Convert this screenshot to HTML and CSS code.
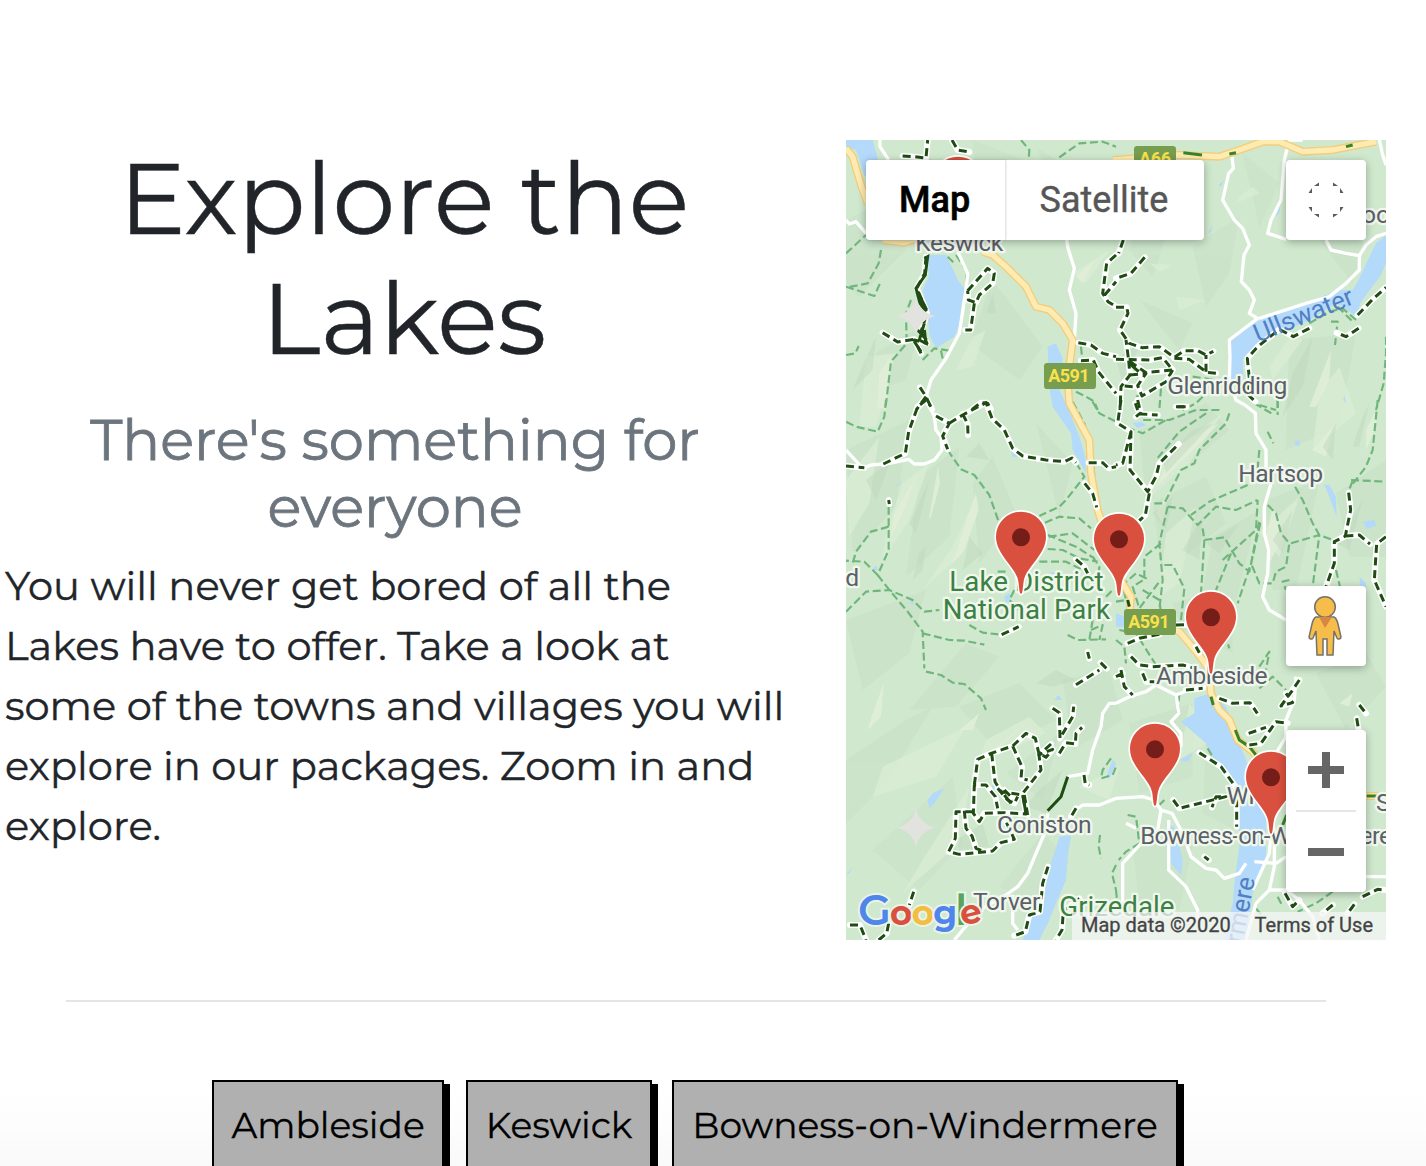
FILE: index.html
```html
<!DOCTYPE html>
<html lang="en">
<head>
<meta charset="utf-8">
<title>Explore the Lakes</title>
<link rel="stylesheet" href="styles.css">
</head>
<body>
<main class="page">
  <section class="explore">
    <div class="intro">
      <h1 class="title">Explore the<br>Lakes</h1>
      <h2 class="subtitle">There's something for<br>everyone</h2>
      <p class="copy">You will never get bored of all the<br>Lakes have to offer. Take a look at<br>some of the towns and villages you will<br>explore in our packages. Zoom in and<br>explore.</p>
    </div>
    <div class="map">
      <svg class="map-canvas" viewBox="0 0 1620 2400" width="540" height="800">
        <defs>
          <g id="pin"><path d="M0 0C-6 0-5-24-9-42C-18-82-75-118-75-171A75 75 0 0 1 75-171C75-118 18-82 9-42C5-24 6 0 0 0Z" fill="#d9503f" stroke="#fff" stroke-width="10" paint-order="stroke"/><circle cy="-169" r="27" fill="#751d18"/></g>
          <path id="star" d="M0-58Q10-12 58 0Q10 12 0 58Q-10 12-58 0Q-10-12 0-58Z" fill="#e2e2df"/>
          <path id="d1" d="M170 48L205 50L240 54L245 0M318 0L335 30L370 36M240 350L236 400L212 445L230 485L243 520L225 575L243 610L205 600L225 640M110 578L155 606L205 598M365 452L425 385L445 400L440 430L400 465L390 488L367 480L365 452M385 490L374 570L358 570M222 742L240 770L258 808M240 770L212 808M378 808L405 788L425 790L435 808M810 345L782 370L770 460L786 485L810 500M697 608L735 615L770 640L810 650M705 662L742 660L757 695L810 760M776 465L810 425"/>
          <path id="d2" d="M22 300L8 340M86 352L45 400L0 415M0 502L32 502L36 520L12 570L40 610L78 623L130 620L175 652L205 632L245 632L270 645L292 634M175 655L220 658L272 697L300 700M270 695L270 645M0 658L100 660L140 653L170 690L90 698L38 662L30 600M38 662L42 705L15 740L12 810M42 705L90 700L65 737L78 768L150 725L170 690M50 740L22 738M65 810L58 790M725 525L768 480L810 442M728 565L690 590L662 578M580 565L532 590L490 568L425 620L394 655L400 715L392 760L418 785M185 800L210 800"/>
          <path id="d3" d="M0 198L55 203M112 192L178 160L188 95L215 20L240 0L255 20M270 48L310 70L290 108L305 148M310 70L350 45L420 8L438 55L475 90L500 145L530 168L600 180L655 185L678 174L690 188M350 42L365 72L366 105M728 188L770 188L788 205L810 200M716 250L740 280L752 322M128 300L130 312M467 704L518 680M690 478L715 500L725 520M725 756L730 776M764 788L782 806"/>
          <path id="d4" d="M15 0L5 70L45 95L42 210L95 275L120 230L130 190L188 132M45 95L20 190L0 195M100 280L88 345L70 362M65 0L75 42L125 45M60 50L75 38M180 20L212 20M698 278L704 330L688 408L655 425L655 490L630 560M688 408L730 405L762 432M810 410L782 432L775 540L810 620M130 703L70 715L35 730M180 675L210 674M240 740L250 758M45 770L70 795L110 800L200 795L240 806"/>
          <path id="d5" d="M690 44L760 0M620 115L640 128L642 205L680 140L683 110M640 250L660 218L688 222L690 190L708 172M615 222L578 255L620 238L600 262L578 248L585 300L530 370L540 432L470 428L415 430L400 455L382 430L385 345L420 345L448 380L455 415M385 345L395 268L435 250L500 228L540 190L568 205L578 248M437 250L447 335L465 365L530 375M500 228L528 290L525 325L545 330M455 355L485 390L505 400L515 380M475 360L495 380M535 375L545 435M382 425L330 425L328 505L308 545L340 553L440 543L465 518L505 508L480 455M355 422L360 475L378 498L390 535L410 543M714 315L718 342L730 345M690 415L675 440M606 590L590 640L582 725L550 735L538 785L505 797M203 665L190 705M12 765L42 765L60 810M128 760L122 790L98 810M700 685L652 725L648 780L630 810"/>
          <path id="d6" d="M15 0L25 50L50 75M0 20L20 10M80 10L90 35L115 35M210 60L260 55M310 85L350 100L402 98L424 130M398 190L450 172M400 225L435 220L480 155L515 160M550 30L530 60L495 108L530 98L510 70M250 248L315 290L362 355L362 470M172 390L190 415L330 380L300 380L288 412M265 560L278 570M730 105L750 130M722 145L728 180M507 670L530 710L550 690M740 680L785 658L810 660M650 705L620 730M715 703L695 730"/>
        </defs>
        <rect width="1620" height="2400" fill="#d0e9ce"/>
        <!-- relief -->
        <g fill="#c9e2c8" opacity=".75">
          <path d="M0 240L120 180L180 330L40 470L0 430ZM380 0L560 70L520 240L390 190ZM250 50L340 150L300 230ZM90 640L220 560L180 720L70 760ZM440 420L590 620L520 720L370 610ZM570 20L720 120L660 230ZM910 110L990 200L920 410L850 330ZM1040 320L1180 230L1150 400L1080 500ZM1190 40L1300 130L1240 260ZM1420 300L1560 270L1520 430ZM880 480L1040 550L1000 630ZM1330 600L1530 580L1480 860L1320 930Z"/>
          <path d="M0 930L190 840L150 1100L20 1240ZM220 1010L340 920L310 1190L180 1310ZM380 1030L440 950L510 1120L400 1270ZM570 850L680 970L640 1130ZM0 1440L240 1350L190 1540L50 1650ZM190 1710L360 1510L460 1550L330 1700ZM880 870L1080 790L1150 870L900 1080ZM920 1090L1080 1010L1140 1150L950 1300ZM1100 1190L1240 1110L1170 1380L1060 1420ZM1260 1080L1420 1020L1350 1350L1280 1350ZM1470 1060L1620 960L1620 1250L1510 1250ZM980 1390L1160 1340L1160 1540L1010 1470Z"/>
          <path d="M0 1860L180 1740L260 1700L120 1930L0 2050ZM80 2130L320 1910L350 2110L220 2250ZM340 1700L520 1630L630 1740L450 1830ZM480 1900L640 1780L590 1980ZM590 2080L670 2160L580 2300L460 2240ZM650 1620L790 1590L830 1740L680 1830ZM850 1750L1040 1690L1040 1910L880 1960ZM860 2120L1050 2070L1000 2310L880 2290ZM1080 1810L1190 1900L1170 2070L1070 2020ZM1410 1600L1560 1540L1620 1640L1500 1770Z"/>
        </g>
        <g fill="#daecd4" opacity=".8">
          <path d="M60 650L150 640L90 860L40 860ZM380 590L420 570L380 680L330 690ZM440 60L570 130L510 170ZM680 400L790 330L720 430ZM910 370L980 375L940 395ZM1180 170L1220 140L1240 160L1170 190ZM990 470L1080 480L1000 510ZM1270 680L1340 580L1370 600L1280 720ZM1420 760L1480 680L1530 820L1400 930ZM0 1020L100 890L70 1090L10 1190ZM120 1180L170 1030L250 970L190 1140L110 1260ZM320 1220L390 1070L350 1240L230 1350ZM930 970L1130 820L1030 970L890 1090ZM960 1180L1050 1100L1000 1330L940 1370ZM1240 1180L1360 1070L1300 1250ZM110 1880L360 1760L270 1910L80 1970ZM230 2160L370 1940L340 2110L170 2260ZM420 1800L550 1730L600 1780L400 1870ZM700 1940L820 1880L790 1980ZM1030 1690L1110 1790L1000 1860Z"/>
        </g>
        <g fill="#e2efd8" opacity=".85">
          <path d="M100 700L133 650L120 810L94 800ZM145 1120L210 1010L170 1120L135 1190ZM248 1140L276 980L282 1030L255 1130ZM375 1100L390 1060L398 1110L355 1230L320 1270ZM990 920L1120 850L1030 940L930 1040ZM930 1120L970 1050L950 1150ZM1390 800L1455 630L1450 720L1410 800ZM1400 930L1460 860L1440 950ZM1260 1190L1280 1100L1310 1190L1270 1270ZM1560 870L1590 810L1590 860L1560 930ZM80 1720L113 1630L105 1730L65 1770ZM340 1770L400 1720L380 1770ZM430 1840L550 1740L450 1830ZM690 410L745 360L710 430ZM1480 1690L1520 1660L1510 1700Z"/>
        </g>
        <g fill="#bfd6bd" opacity=".45">
          <path d="M40 700L90 590L80 690L20 750ZM60 1020L135 960L90 1080ZM190 1150L250 1020L210 1180ZM220 1240L240 1220L230 1290L200 1320ZM340 970L400 910L430 960L360 950ZM370 1190L410 1240L350 1290ZM950 960L1040 870L1100 850L960 1000ZM920 1120L980 1070L960 1170ZM1010 1230L1070 1130L1060 1260ZM1080 1210L1180 1150L1120 1240ZM1340 700L1400 590L1370 740L1310 830ZM1430 920L1470 850L1460 960ZM1520 920L1550 830L1570 790L1540 920ZM1280 1200L1340 1110L1310 1240ZM1470 1210L1550 1080L1510 1230ZM630 1590L690 1620L620 1640L570 1630ZM570 1960L650 1890L600 2020L540 2000ZM330 2100L410 2050L430 2120L340 2130ZM810 660L890 600L830 730ZM420 520L440 460L450 520Z"/>
        </g>
        <!-- water -->
        <g fill="#b3d9fb">
          <path d="M20 0L80 0L95 55L105 100L55 108L30 30L0 20L0 0ZM245 345L300 345L325 395L335 420L355 445L345 500L340 555L325 590L270 625L250 585L245 520L230 450L248 410ZM605 620L630 610L650 655L640 750L665 800L700 890L718 950L720 1000L680 930L675 880L620 800L610 745ZM1150 605L1230 545L1400 480L1480 450L1520 450L1535 425L1580 330L1590 310L1620 285L1620 370L1605 405L1545 485L1530 530L1505 510L1470 490L1390 540L1300 580L1250 615L1190 660L1192 720L1150 740Z"/>
          <path d="M1045 1675L1095 1660L1140 1700L1165 1770L1200 1860L1230 1930L1260 2030L1260 2150L1240 2210L1220 2260L1200 2400L1135 2400L1160 2290L1165 2230L1180 2120L1175 1960L1120 1890L1080 1810L1005 1745L1045 1720ZM640 2090L675 2085L665 2150L660 2220L630 2290L610 2340L580 2400L530 2400L560 2320L600 2240L610 2180L625 2140ZM970 2055L985 2060L1010 2160L1005 2205L975 2170ZM245 1980L260 1960L295 1945L265 1990L250 2005ZM435 1950L445 1925L455 1950ZM625 1680L637 1665L648 1680ZM1000 1860L1040 1840L1025 1865ZM860 850L885 845L900 855L875 865ZM1435 1035L1450 1035L1470 1070L1472 1130L1450 1070ZM1550 1145L1585 1140L1590 1155L1565 1168ZM1540 1310L1560 1330L1560 1365L1545 1350ZM475 1370L490 1360L495 1375L480 1390ZM780 1910L800 1860L810 1870L790 1915ZM810 1420L840 1430L835 1460L810 1460ZM495 930L515 950L500 952ZM1345 905L1360 900L1362 915L1350 918Z"/>
          <path d="M145 1045L170 1020L160 1035ZM0 2205L20 2180L10 2200ZM1085 280L1100 255L1095 275ZM1118 135L1135 120L1125 140ZM1290 230L1305 180L1300 220ZM1495 765L1500 790L1492 780ZM80 1290L90 1275L95 1290ZM190 1380L203 1385L198 1395ZM612 1295L630 1298L620 1308Z"/>
        </g>
        <!-- hill paths -->
        <g class="path-green">
          <path d="M525 0L550 30L548 60M640 52L700 10L770 5L810 20M0 340L60 285M105 330L98 370L65 430L0 443M0 440L85 468L102 430M195 480L180 520L182 610L135 665L118 808M0 645L28 640L38 618M330 345L360 390L362 450M305 350L325 370M230 660L265 625L310 632M285 632L292 665M705 620L710 670M690 755L720 770L745 785L755 810"/>
          <g transform="translate(810)"><path d="M580 550L640 515L680 505L720 540M645 545L665 545L657 615M665 500L710 545M135 745L130 810M260 770L240 790L200 810M430 795L480 810M485 780V810M810 590V640L803 730L780 810M60 770L130 745M230 710L300 720"/></g>
          <g transform="translate(0 780)"><path d="M120 0L115 50L95 95L30 80L0 65M305 150L345 208L385 225L430 285L458 365M128 320L128 450L95 525L55 485L0 482M128 380L75 395L30 455L20 490M95 525L130 570L185 635L230 695L235 805M0 635L30 605L60 575L130 570L200 600L235 635L280 630M230 700L310 720L355 722L415 734M370 675L410 698L467 704M680 5L715 70L740 160L745 230L755 320M690 188L715 230L660 300L640 320L580 348M597 368L640 350L700 355L735 385M608 410L680 400L745 450M605 405L690 440L745 475M605 447L650 450L700 475L755 485M580 485L660 485L720 515M505 570L490 600L520 630M665 705L695 720L780 718M735 690L770 675L760 720M740 660L730 720M780 590L800 570M740 5L760 40L810 65M455 515L480 515M740 470L760 500L755 560"/></g>
          <g transform="translate(810 780)"><path d="M310 30L240 30L160 60L75 60M340 40L330 70L250 150L235 190L195 210L145 310L100 310M270 40L190 95L120 180M0 70L80 100L150 60M155 320L200 325L245 375L300 320L360 330L425 300M395 255L280 305L225 345M155 320L130 430L140 540L130 630M135 430L85 470L85 540M145 495L170 495L205 565L195 660M260 385L265 420L255 580M265 420L325 412L370 490L400 515L435 360M345 460L300 570M320 480L420 390L425 300M430 365L405 490L365 610M455 315L480 340L495 400L520 430L510 500L480 515L470 550L430 550L405 490M525 430L610 405L590 560M520 230L560 300L590 370L610 405L650 420M520 540L500 545L510 570M455 95L472 130M430 150L425 205M415 10L475 45M485 0V45M785 0L770 150L750 200L700 265M705 240L810 245M710 240L700 270M660 510L672 560M0 605L30 600L20 555L60 520L90 535L50 560L70 625L130 545M10 690L60 700L120 795M0 720L25 740L30 790M325 700L340 745M430 800L460 755L450 810M80 570L130 600L135 640"/></g>
          <g transform="translate(0 1590)"><path d="M240 5L285 15L320 38L355 42L405 85L420 120M762 495L758 530L765 565M810 585L798 610L810 660M795 265L770 300L765 325L800 315L810 290"/></g>
          <g transform="translate(810 1590)"><path d="M190 70L185 130M275 235L290 260M130 405L145 390M35 435L60 440L70 520L30 545L8 570M0 660L5 710M485 680L500 710M650 665L600 700L545 725M420 715L440 740M430 55L470 20L510 60"/></g>
        </g>
        <!-- minor roads -->
        <g class="road-white">
          <path d="M102 0V20L128 60M0 240L10 252L30 245L60 280M335 335L365 400L360 450L340 580L300 655L255 720L240 770L265 830L270 870L285 890L288 930L265 960L235 972H205L188 958L130 970L75 975L50 985L0 930M662 300L666 325L685 385L670 450L690 520L685 600"/>
          <path d="M1158 50L1162 85L1148 100L1130 180L1165 240L1190 265L1210 315L1194 345L1186 425L1210 450L1225 480L1210 520L1235 535L1150 600L1152 650L1150 720L1170 780L1200 797L1228 820L1230 880L1260 930L1260 990L1275 1030L1255 1100L1255 1180L1268 1230L1265 1300L1250 1370L1270 1410L1320 1440"/>
          <path d="M1370 0H1330L1315 60L1305 180L1275 240L1265 280L1320 298M1440 300L1455 330L1500 340L1540 347L1560 315L1590 290L1620 280M1540 347L1540 390L1500 430L1450 470L1380 490L1240 535M1600 0L1610 45L1620 75"/>
          <path d="M810 1690H790L770 1720L765 1760L740 1830L725 1900L665 1910M605 2020L600 2070L570 2140L545 2200L515 2240L480 2265L400 2310L325 2400M500 2265V2350L515 2370M675 2020L710 1995L760 1995L810 1975L890 1970L925 1980L945 2010L978 2020L1010 2080L1035 2150L1080 2185L1110 2190L1135 2215L1180 2200L1200 2170M810 1690L850 1670L900 1655L930 1635L990 1665L1030 1650L1080 1640M990 1660L998 1720L975 1745L1005 1780L1005 1820M945 2010L935 2070L890 2105L830 2170V2300M968 2040V2190L1020 2240L1055 2310V2340M1275 2080L1270 2140L1220 2250M1285 2070L1285 2180L1270 2250L1230 2290L1200 2400M1225 2165L1290 2170L1320 2150M1270 2250H1320L1360 2280L1400 2330L1420 2400M1350 1610L1345 1680L1320 1740L1320 1790L1290 1840M1560 2210H1620M870 2065L840 2050"/>
        </g>
        <!-- main roads -->
        <g class="road-main">
          <path class="edge" d="M0 25L20 50L45 135L65 190M110 300L175 308L215 295M410 335L440 345L485 385L540 440L570 500L610 510L650 550L680 600L665 720L670 790L730 900L735 1000L755 1110L800 1250L830 1330L855 1370L850 1430L1000 1475L1030 1510L1070 1560L1090 1590L1095 1660L1120 1710L1150 1740L1175 1800L1220 1835L1270 1900M800 60L1000 45L1120 50L1180 30L1250 5H1300L1370 35L1460 30L1590 5M1560 1968H1620"/>
          <path class="fill" d="M0 25L20 50L45 135L65 190M110 300L175 308L215 295M410 335L440 345L485 385L540 440L570 500L610 510L650 550L680 600L665 720L670 790L730 900L735 1000L755 1110L800 1250L830 1330L855 1370L850 1430L1000 1475L1030 1510L1070 1560L1090 1590L1095 1660L1120 1710L1150 1740L1175 1800L1220 1835L1270 1900M800 60L1000 45L1120 50L1180 30L1250 5H1300L1370 35L1460 30L1590 5M1560 1968H1620"/>
        </g>
        <g class="road-green"><path d="M1012 38L1068 45M1150 42L1170 38M1500 20L1520 15M1168 1770L1180 1800L1210 1820L1230 1845M1095 1670L1102 1695M1310 2055L1322 2025M1562 1968H1620"/></g>
        <!-- footpaths -->
        <g class="trail-case"><use href="#d1"/><use href="#d2" x="810"/><use href="#d3" y="780"/><use href="#d4" x="810" y="780"/><use href="#d5" y="1590"/><use href="#d6" x="810" y="1590"/></g>
        <g class="trail"><use href="#d1"/><use href="#d2" x="810"/><use href="#d3" y="780"/><use href="#d4" x="810" y="780"/><use href="#d5" y="1590"/><use href="#d6" x="810" y="1590"/></g>
        <path class="trail-solid" d="M235 355L245 350L238 405L210 445L222 490L240 515M215 455L242 510M235 550L220 600L240 610L235 570M205 605L225 635M215 570L242 600M665 1910L645 1970L605 2012M475 1965L495 1990M530 1965L540 2020M845 1380L850 1400M850 670L878 695"/>
        <use href="#star" x="210" y="528"/><use href="#star" x="210" y="2063"/>
        <!-- road shields -->
        <g><rect x="864" y="18" width="126" height="76" rx="10" class="shield"/><rect x="594" y="669" width="156" height="78" rx="10" class="shield"/><rect x="834" y="1407" width="156" height="78" rx="10" class="shield"/></g>
        <g class="shield-text"><text x="879" y="75" textLength="96">A66</text><text x="607" y="727" textLength="124">A591</text><text x="847" y="1465" textLength="124">A591</text></g>
        <!-- place names -->
        <g class="label">
          <text x="208" y="334" textLength="264">Keswick</text><text x="1548" y="248">oo</text>
          <text x="964" y="762" textLength="360">Glenridding</text><text x="1177" y="1025" textLength="254">Hartsop</text>
          <text x="-2" y="1337">d</text><text x="930" y="1632" textLength="335">Ambleside</text>
          <text x="1142" y="1993">Wi</text><text x="453" y="2080" textLength="284">Coniston</text>
          <text x="883" y="2113" textLength="755">Bowness-on-Windermere</text><text x="1590" y="2013">S</text>
          <text x="381" y="2311" textLength="202">Torver</text>
        </g>
        <g class="label park"><text x="310" y="1353" textLength="463">Lake District</text><text x="290" y="1436" textLength="502">National Park</text><text x="640" y="2328" textLength="345">Grizedale</text></g>
        <g class="water-name"><text transform="translate(1236 608) rotate(-22)" textLength="315">Ullswater</text><text transform="translate(1227 2216) rotate(-79)" text-anchor="end">Windermere</text></g>
        <use href="#pin" x="336" y="296"/><use href="#pin" x="525" y="1361"/><use href="#pin" x="819" y="1367"/><use href="#pin" x="1095" y="1601"/><use href="#pin" x="927" y="1997"/><use href="#pin" x="1275" y="2081"/>
        <g class="google"><text y="2354"><tspan fill="#4e86ec" x="36">G</tspan><tspan fill="#d9503f" class="small" x="132">o</tspan><tspan fill="#f3bd42" class="small" x="197">o</tspan><tspan fill="#4e86ec" class="small" x="262">g</tspan><tspan fill="#58a55c" x="327">l</tspan><tspan fill="#d9503f" class="small" rotate="-14" x="350" dy="4">e</tspan></text></g>
      </svg>
      <div class="map-types"><span class="type active">Map</span><span class="type">Satellite</span></div>
      <div class="ctl fullscreen"><svg width="36" height="36" viewBox="0 0 36 36" fill="#5a5a5a"><path d="M6 4L11 .5V4ZM25 .5L30 4H25ZM4 6V11H.5ZM32 6L35.500 11H32ZM.5 25H4V30ZM35.500 25L32 30V25ZM6 32H11V35.500ZM25 32H30L25 35.500Z"/></svg></div>
      <div class="ctl pegman"><svg width="36" height="62" viewBox="0 0 36 62"><g fill="#f6bd4b" stroke="#757269" stroke-width="1.500"><path d="M9 22H27C29 23 30 25 31 29L34 42C34 44 31 45 30 43L27 36L26 60H20V44H16V60H10L9 36L6 43C5 45 2 44 2 42L5 29C6 25 7 23 9 22Z"/><circle cx="18" cy="12" r="10.300"/></g><path d="M12 22H25L18 33Z" fill="#d98643"/></svg></div>
      <div class="ctl zoom"><svg width="80" height="162" viewBox="0 0 80 162" fill="#666"><path d="M36 22H44V36H58V44H44V58H36V44H22V36H36ZM22 118H58V126H22Z"/><path d="M10 80H70V82H10Z" fill="#e6e6e6"/></svg></div>
      <div class="attribution"><span>Map data ©2020</span><span>Terms of Use</span></div>
    </div>
  </section>
  <hr class="rule">
  <nav class="towns"><a class="town ambleside">Ambleside</a><a class="town keswick">Keswick</a><a class="town bowness">Bowness-on-Windermere</a></nav>
</main>
</body>
</html>
```
FILE: styles.css
```css
* { box-sizing: border-box; }
body { margin: 0; background: #fff; color: #212529; font-family: Montserrat, Inter, sans-serif; }
.page { height: 1166px; overflow: hidden; padding-top: 140px; background: linear-gradient(#fff 1080px, #fdfdfd 1130px, #f9f9f9 1166px); }
.explore { display: flex; height: 800px; }
.intro { width: 846px; flex: none; padding-left: 5px; white-space: nowrap; -webkit-text-stroke: .4px currentColor; }
.title { margin: -2px 0 0; width: 798px; text-align: center; font-size: 100px; line-height: 120px; font-weight: 400; }
.subtitle { margin: 29px 0 0; width: 780px; text-align: center; font-size: 56px; line-height: 66.5px; font-weight: 400; color: #6c757d; -webkit-text-stroke: .8px currentColor; }
.copy { margin: 15.500px 0 0; font-size: 40px; line-height: 60px; font-weight: 400; }
.map { position: relative; width: 540px; height: 800px; overflow: hidden; font-family: Roboto, sans-serif; }
.map-canvas { display: block; }
.path-green { fill: none; stroke: #70b67c; stroke-width: 6.5; stroke-dasharray: 24 11; stroke-linejoin: round; }
.road-white { fill: none; stroke: #fff; stroke-width: 10; stroke-linejoin: round; }
.road-main { fill: none; stroke-linejoin: round; }
.edge { stroke: #f2cd7c; stroke-width: 24; }
.fill { stroke: #feebb1; stroke-width: 16; }
.road-green { fill: none; stroke: #37832b; stroke-width: 9; }
.trail-case { fill: none; stroke: #fff; stroke-width: 18; stroke-linejoin: round; stroke-linecap: round; }
.trail { fill: none; stroke: #1f4c13; stroke-width: 9; stroke-dasharray: 24 14; stroke-linejoin: round; }
.trail-solid { fill: none; stroke: #1f4c13; stroke-width: 9; }
.shield { fill: #779d4f; }
.shield-text { fill: #fbe14c; font-size: 54px; font-weight: 700; }
.label { fill: #5b6068; font-size: 74px; stroke: #f0f7ec; stroke-width: 14px; stroke-linejoin: round; paint-order: stroke; }
.park { fill: #3b8144; font-size: 83px; }
.water-name { fill: #527fc3; font-size: 77px; }
.google { font: 600 128px Montserrat, Inter, sans-serif; stroke: #e9f4e6; stroke-width: 12px; paint-order: stroke; }
.small { font-size: 102px; font-weight: 700; }
.map-types { position: absolute; left: 20px; top: 20px; display: flex; width: 338px; height: 80px; background: #fff; border-radius: 4px; box-shadow: 0 2px 8px rgba(0,0,0,.3); }
.type { width: 199px; padding-left: 34.500px; line-height: 80px; font-size: 36px; color: #565656; -webkit-text-stroke: .4px currentColor; }
.type.active { width: 139px; padding-left: 33px; font-weight: 500; color: #000; -webkit-text-stroke-width: .6px; box-shadow: 1px 0 2px rgba(0,0,0,.15); }
.ctl { position: absolute; left: 440px; width: 80px; height: 80px; background: #fff; border-radius: 4px; box-shadow: 0 2px 8px rgba(0,0,0,.3); display: flex; align-items: center; justify-content: center; }
.fullscreen { top: 20px; }
.pegman { top: 446px; padding-right: 2px; }
.zoom { top: 590px; height: 162px; }
.attribution { position: absolute; left: 226px; right: 0; bottom: 0; height: 28px; padding: 0 13px 0 9px; display: flex; justify-content: space-between; background: rgba(245,245,245,.75); font-size: 20px; line-height: 27px; color: #444; -webkit-text-stroke: .3px currentColor; }
.rule { height: 2px; margin: 60px 100px 78px 66px; border: 0; background: #e5e5e5; }
.towns { display: flex; padding-left: 212px; }
.town { height: 110px; border: 2px solid #000; background: #b0b0b0; box-shadow: 6px 4px 0 #000; text-align: center; white-space: nowrap; color: #000; font-size: 36px; line-height: 86px; -webkit-text-stroke: .3px currentColor; }
.ambleside { width: 232px; margin-right: 22px; }
.keswick { width: 186px; margin-right: 20px; }
.bowness { width: 506px; }
```
